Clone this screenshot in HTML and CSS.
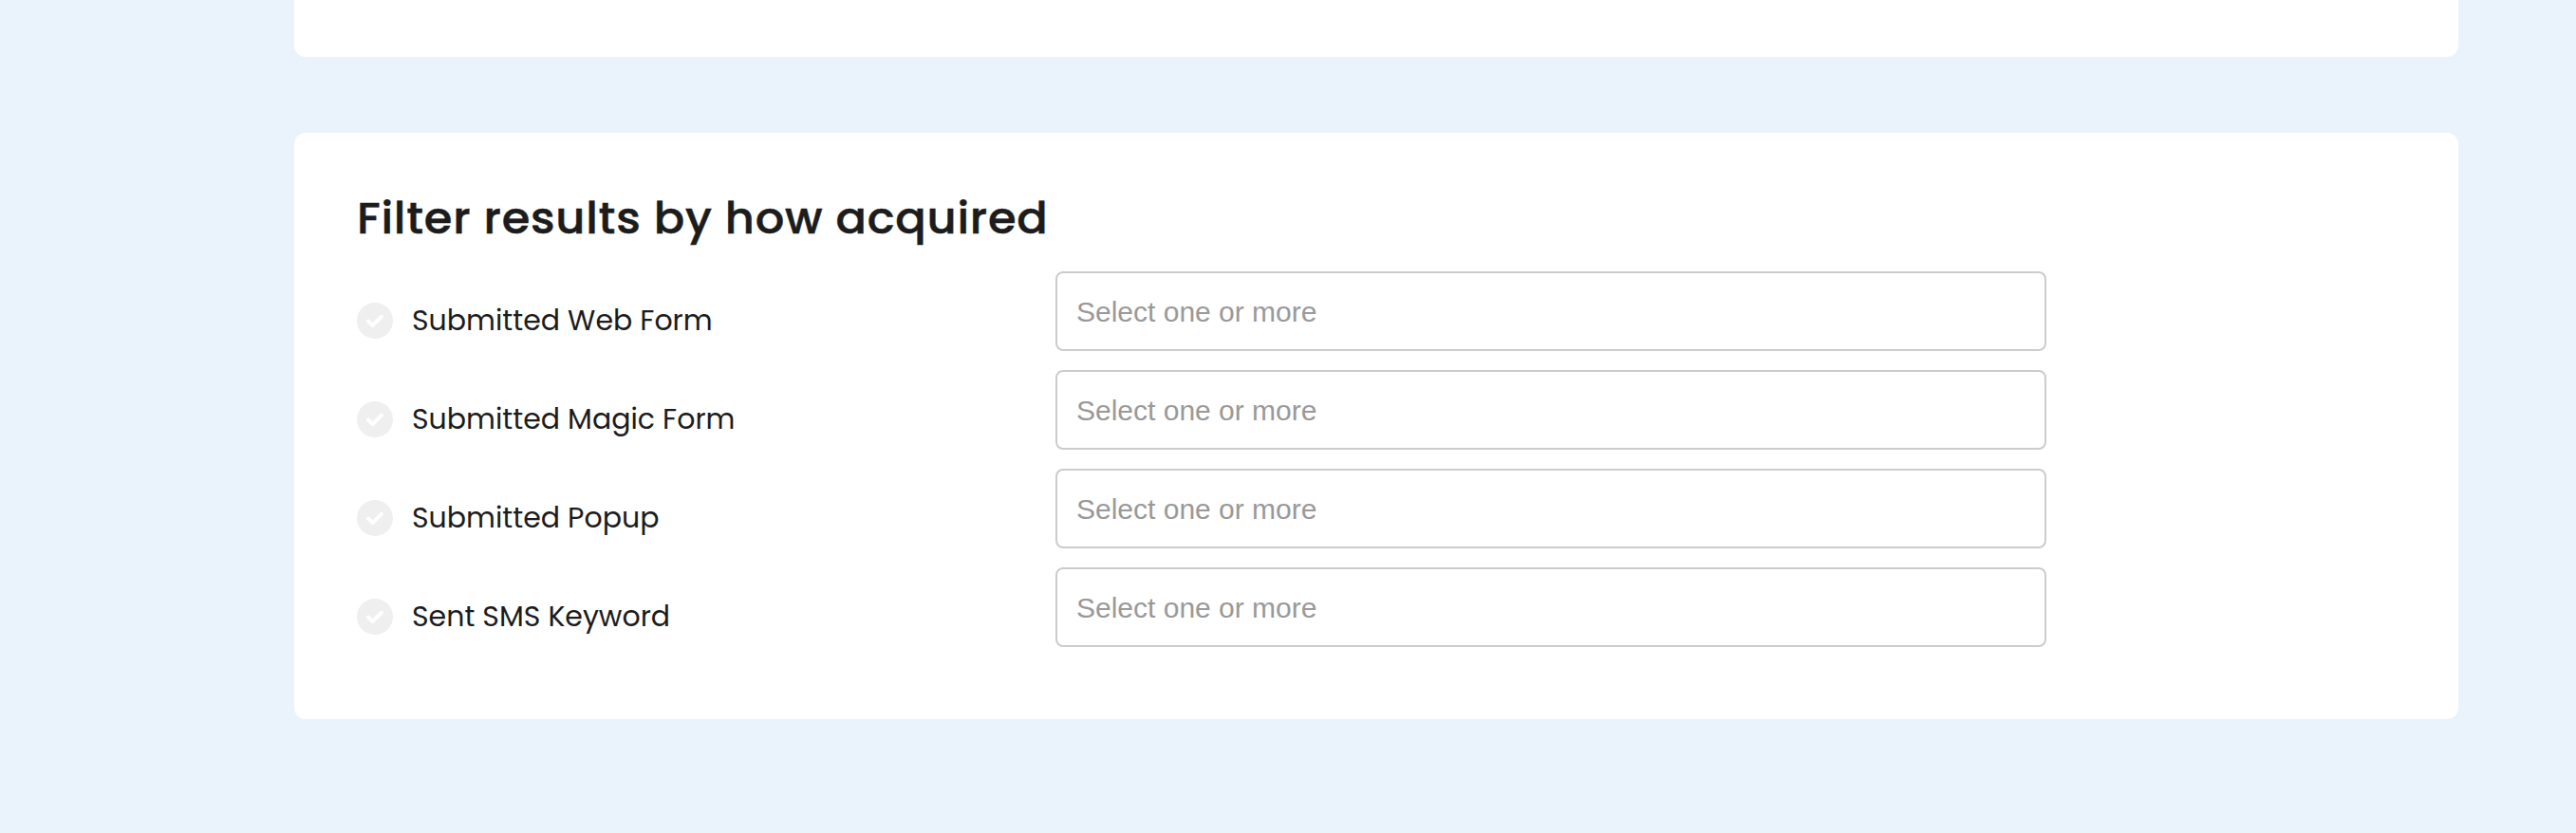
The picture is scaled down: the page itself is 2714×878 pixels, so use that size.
FILE: index.html
```html
<!DOCTYPE html>
<html lang="en">
  <head>
    <meta charset="UTF-8" />
    <meta name="viewport" content="width=device-width, initial-scale=1.0" />
    <title>Filter results</title>
    <link rel="stylesheet" href="styles.css">
  </head>
  <body>
    <main class="page">
      <section class="card card-prev"></section>

      <section class="card filters">
        <h2 class="title">Filter results by how acquired</h2>
        <div class="row">
          <div class="option">
            <svg class="check" viewBox="0 0 38 38"><circle cx="19" cy="19" r="19" /><path d="M12 19.5l4.6 4.6L26 14.7" /></svg>
            <span class="label">Submitted Web Form</span>
          </div>
          <input class="select" type="text" placeholder="Select one or more" />
        </div>
        <div class="row">
          <div class="option">
            <svg class="check" viewBox="0 0 38 38"><circle cx="19" cy="19" r="19" /><path d="M12 19.5l4.6 4.6L26 14.7" /></svg>
            <span class="label">Submitted Magic Form</span>
          </div>
          <input class="select" type="text" placeholder="Select one or more" />
        </div>
        <div class="row">
          <div class="option">
            <svg class="check" viewBox="0 0 38 38"><circle cx="19" cy="19" r="19" /><path d="M12 19.5l4.6 4.6L26 14.7" /></svg>
            <span class="label">Submitted Popup</span>
          </div>
          <input class="select" type="text" placeholder="Select one or more" />
        </div>
        <div class="row">
          <div class="option">
            <svg class="check" viewBox="0 0 38 38"><circle cx="19" cy="19" r="19" /><path d="M12 19.5l4.6 4.6L26 14.7" /></svg>
            <span class="label">Sent SMS Keyword</span>
          </div>
          <input class="select" type="text" placeholder="Select one or more" />
        </div>
      </section>
    </main>
  </body>
</html>
```
FILE: styles.css
```css
* {
  margin: 0;
  padding: 0;
  box-sizing: border-box;
}
body {
  background-color: #eaf2fc;
  color: #1c1c1c;
  font-family: Poppins, Inter, sans-serif;
}
.page {
  display: flex;
  flex-direction: column;
  gap: 80px;
  width: 2280px;
  margin-left: 310px;
}
.card {
  background-color: #fff;
  border-radius: 12px;
}
.card-prev {
  height: 60px;
  border-radius: 0 0 12px 12px;
}
.filters {
  height: 618px;
  padding: 54px 66px 0;
}
.title {
  height: 92px;
  line-height: 72px;
  font-size: 46px;
  font-weight: 500;
  letter-spacing: 0.72px;
  -webkit-text-stroke: 0.5px #1c1c1c;
  white-space: nowrap;
  transform: scaleX(1.042);
  transform-origin: left;
}
.row {
  display: flex;
  height: 84px;
  margin-bottom: 20px;
}
.option {
  display: flex;
  align-items: center;
  width: 736px;
  padding-top: 20px;
}
.check {
  width: 38px;
  height: 38px;
  margin-right: 20px;
}
.check circle {
  fill: #efefef;
}
.check path {
  fill: none;
  stroke: #fff;
  stroke-width: 4;
  stroke-linecap: round;
  stroke-linejoin: round;
}
.label {
  font-size: 30px;
  line-height: 38px;
  white-space: nowrap;
}
.select {
  width: 1044px;
  height: 84px;
  padding: 2px 20px 0;
  border: 2px solid #ccc;
  border-radius: 8px;
  outline: none;
  background-color: #fff;
  font-family: Helvetica, "Liberation Sans", Arial, sans-serif;
  font-size: 30px;
}
.select::placeholder {
  color: #999;
}
```
